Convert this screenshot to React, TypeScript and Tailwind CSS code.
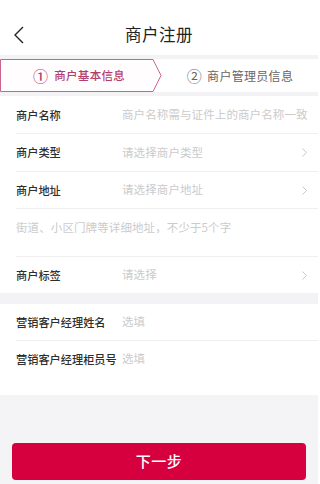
import React from "react";

const font = { fontFamily: '"Noto Sans CJK SC", "Noto Sans", sans-serif' };

function Chevron() {
  return (
    <svg width="7" height="11" viewBox="0 0 7 11" className="shrink-0">
      <path d="M1.5 1.5l4 4-4 4" fill="none" stroke="#c8c8c8" strokeWidth="1" />
    </svg>
  );
}

function Row({
  label,
  placeholder,
  arrow,
  border = true,
  h = "h-[37px]",
}: {
  label: string;
  placeholder: string;
  arrow?: boolean;
  border?: boolean;
  h?: string;
}) {
  return (
    <div className="pl-4">
      <div
        className={`flex ${h} items-center pr-[10px] ${border ? "border-b border-[#efefef]" : ""}`}
      >
        <span className="w-[106px] shrink-0 text-[11.2px] font-medium text-[#2e2e2e]">{label}</span>
        <span className="flex-1 truncate text-[11.5px] tracking-[0.1px] text-[#cbcbcb]">{placeholder}</span>
        {arrow ? <Chevron /> : null}
      </div>
    </div>
  );
}

export default function App() {
  return (
    <div className="flex h-[484px] w-[318px] flex-col bg-white" style={font}>
      <header className="relative flex h-[55px] items-center justify-center">
        <svg
          width="12"
          height="18"
          viewBox="0 0 12 18"
          className="absolute left-[13px] top-[26px]"
        >
          <path d="M10 1L2 9l8 8" fill="none" stroke="#222" strokeWidth="1.4" />
        </svg>
        <h1 className="mt-[14px] text-[16.5px] tracking-[0.5px] text-[#222]">商户注册</h1>
      </header>

      <div className="bg-[#f3f3f5] py-[4px]">
        <div className="flex h-[33px] bg-white">
          <div className="relative flex w-[162px] items-center justify-center">
            <svg width="162" height="33" viewBox="0 0 162 33" className="absolute inset-0">
              <path
                d="M0.5 0.5H153L161 16.5L153 32.5H0.5Z"
                fill="#fffdfe"
                stroke="#c9658e"
                strokeWidth="1"
              />
            </svg>
            <span className="relative flex items-center gap-[6px] pr-1 text-[11.5px] font-medium tracking-[0.3px] text-[#b23c6c]">
              <span className="text-[15px] leading-none">①</span>
              商户基本信息
            </span>
          </div>
          <div className="flex flex-1 items-center justify-center">
            <span className="flex items-center gap-[5px] text-[12px] tracking-[0.3px] text-[#666]">
              <span className="text-[15px] leading-none">②</span>
              商户管理员信息
            </span>
          </div>
        </div>
      </div>

      <section className="pt-[1px]">
        <Row label="商户名称" placeholder="商户名称需与证件上的商户名称一致" />
        <Row label="商户类型" placeholder="请选择商户类型" arrow h="h-[38px]" />
        <Row label="商户地址" placeholder="请选择商户地址" arrow />
        <div className="pl-4">
          <div className="h-[48px] border-b border-[#efefef] pt-[10px] text-[11.5px] tracking-[0.1px] text-[#cbcbcb]">
            街道、小区门牌等详细地址，不少于5个字
          </div>
        </div>
        <Row label="商户标签" placeholder="请选择" arrow border={false} h="h-[36px]" />
      </section>

      <div className="h-[11px] bg-[#f3f3f5]" />

      <section className="pb-[18px]">
        <Row label="营销客户经理姓名" placeholder="选填" />
        <Row label="营销客户经理柜员号" placeholder="选填" border={false} h="h-[36px]" />
      </section>

      <div className="flex flex-1 flex-col justify-end bg-[#f4f4f6] px-3 pb-[4px]">
        <button
          type="button"
          className="h-[37px] w-full rounded-[4px] bg-[#d5003d] text-[15px] font-medium tracking-[0.5px] text-white"
        >
          下一步
        </button>
      </div>
    </div>
  );
}
